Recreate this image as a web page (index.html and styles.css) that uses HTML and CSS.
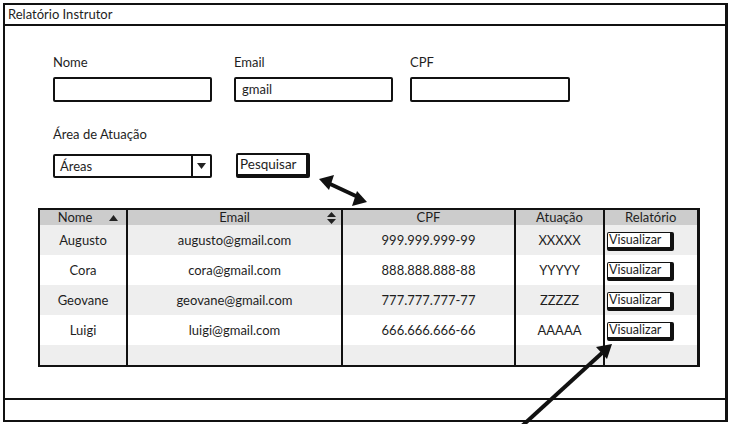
FILE: index.html
```html
<!DOCTYPE html>
<html lang="pt">
<head>
<meta charset="utf-8">
<title>Relatório Instrutor</title>
<link rel="stylesheet" href="styles.css">
</head>
<body>
<div class="window">
  <div class="titlebar">Relatório Instrutor</div>
  <div class="content">
    <div class="form-row">
      <div class="field">
        <label class="label">Nome</label>
        <div class="input"></div>
      </div>
      <div class="field">
        <label class="label">Email</label>
        <div class="input">gmail</div>
      </div>
      <div class="field">
        <label class="label">CPF</label>
        <div class="input"></div>
      </div>
    </div>
    <div class="form-row second">
      <div class="field">
        <label class="label">Área de Atuação</label>
        <div class="select"><span class="select-text">Áreas</span><span class="select-btn"><svg width="9" height="6" viewBox="0 0 9 6"><path d="M0 0H9L4.5 6Z" fill="#222"/></svg></span></div>
      </div>
      <div class="field btn-field">
        <div class="button">Pesquisar</div>
      </div>
    </div>
    <table class="grid">
      <colgroup>
        <col class="c1"><col class="c2"><col class="c3"><col class="c4"><col class="c5">
      </colgroup>
      <thead>
        <tr>
          <th><span class="th-nome">Nome</span><svg class="sort-up" width="9" height="6" viewBox="0 0 9 6"><path d="M0 6H9L4.5 0Z" fill="#222"/></svg></th>
          <th>Email<svg class="sort-both" width="9" height="12" viewBox="0 0 9 12"><path d="M0 5H9L4.5 0Z M0 7H9L4.5 12Z" fill="#222"/></svg></th>
          <th>CPF</th>
          <th>Atuação</th>
          <th>Relatório</th>
        </tr>
      </thead>
      <tbody>
        <tr class="alt"><td>Augusto</td><td>augusto@gmail.com</td><td>999.999.999-99</td><td>XXXXX</td><td class="act"><span class="mini-btn">Visualizar</span></td></tr>
        <tr><td>Cora</td><td>cora@gmail.com</td><td>888.888.888-88</td><td>YYYYY</td><td class="act"><span class="mini-btn">Visualizar</span></td></tr>
        <tr class="alt"><td>Geovane</td><td>geovane@gmail.com</td><td>777.777.777-77</td><td>ZZZZZ</td><td class="act"><span class="mini-btn">Visualizar</span></td></tr>
        <tr><td>Luigi</td><td>luigi@gmail.com</td><td>666.666.666-66</td><td>AAAAA</td><td class="act"><span class="mini-btn">Visualizar</span></td></tr>
        <tr class="alt last"><td></td><td></td><td></td><td></td><td></td></tr>
      </tbody>
    </table>
  </div>
  <div class="statusbar"></div>
  <svg class="arrow" width="731" height="424" viewBox="0 0 731 424">
    <line x1="328" y1="183" x2="358" y2="197" stroke="#111" stroke-width="4"/>
    <path d="M319 179 L334 175 L329 190 Z" fill="#111"/>
    <path d="M367 202 L352 206 L357 191 Z" fill="#111"/>
    <line x1="522" y1="426" x2="602" y2="353" stroke="#111" stroke-width="4"/>
    <path d="M612 344 L607 359 L596 347 Z" fill="#111"/>
  </svg>
</div>
</body>
</html>
```

FILE: styles.css
```css
* { box-sizing: border-box; }
html, body { margin: 0; padding: 0; background: #fff; }
body {
  font-family: "Lato", "Noto Sans", sans-serif;
  font-size: 13px;
  color: #1e1e1e;
  width: 731px;
  height: 424px;
  overflow: hidden;
}
.window {
  position: relative;
  margin: 3px 0 0 3px;
  width: 725px;
  height: 419px;
  border: 2px solid #111;
  border-right-width: 3px;
  display: flex;
  flex-direction: column;
}
.titlebar {
  height: 21px;
  border-bottom: 2px solid #111;
  padding: 1px 0 0 3px;
  line-height: 17px;
  font-size: 13px;
}
.content {
  flex: 1;
  padding: 28px 0 0 33px;
}
.form-row {
  display: flex;
  gap: 23px;
  padding-left: 15px;
}
.form-row .field { width: 159px; display: flex; flex-direction: column; }
.form-row .field + .field { margin-left: -1px; }
.form-row .field + .field + .field { width: 160px; margin-left: -6px; }
.label { line-height: 16px; height: 16px; }
.input {
  margin-top: 7px;
  height: 25px;
  border: 2px solid #111;
  border-radius: 2px;
  padding: 0 6px;
  line-height: 21px;
}
.second { margin-top: 24px; }
.second .label { margin-bottom: 12px; }
.select {
  height: 24px;
  border: 2px solid #111;
  border-radius: 2px;
  display: flex;
  line-height: 20px;
}
.select-text { flex: 1; padding-left: 5px; }
.select-btn {
  width: 19px;
  border-left: 2px solid #111;
  display: flex;
  align-items: center;
  justify-content: center;
}
.btn-field { justify-content: flex-end; width: auto !important; margin-left: 0 !important; }
.button {
  margin-left: 1px;
  width: 74px;
  height: 25px;
  border: 2px solid #111;
  border-right-width: 4px;
  border-bottom-width: 4px;
  border-radius: 2px;
  padding-left: 2px;
  line-height: 19px;
  font-size: 13.5px;
}
.grid {
  margin-top: 30px;
  border-collapse: collapse;
  width: 659px;
  table-layout: fixed;
  border: 2px solid #111;
  border-right-width: 3px;
}
.c1 { width: 88px; }
.c2 { width: 215px; }
.c3 { width: 173px; }
.c4 { width: 89px; }
.c5 { width: 94px; }
.grid th {
  background: #cccccc;
  font-weight: normal;
  height: 15px;
  line-height: 15px;
  padding: 0;
  border-left: 2px solid #111;
  position: relative;
}
.grid td {
  height: 30px;
  padding: 0 0 1px;
  text-align: center;
  border-left: 2px solid #111;
}
.grid th:first-child, .grid td:first-child { border-left: 0; }
.th-nome { position: relative; left: -8px; }
.sort-up { position: absolute; right: 8px; top: 5px; }
.sort-both { position: absolute; right: 5px; top: 2px; }
.grid tr.alt td { background: #eeeeee; }
.grid tr.last td { height: 21px; }
.grid td.act { text-align: left; padding: 3px 0 0 2px; }
.mini-btn {
  display: inline-block;
  width: 67px;
  height: 19px;
  border: 1.5px solid #111;
  border-right-width: 4px;
  border-bottom-width: 4px;
  border-radius: 2px;
  background: #fff;
  font-size: 12.5px;
  line-height: 14px;
  padding-left: 1px;
  vertical-align: middle;
}
.statusbar {
  height: 22px;
  border-top: 2px solid #111;
}
.arrow { position: absolute; left: -5px; top: -5px; pointer-events: none; }
```
